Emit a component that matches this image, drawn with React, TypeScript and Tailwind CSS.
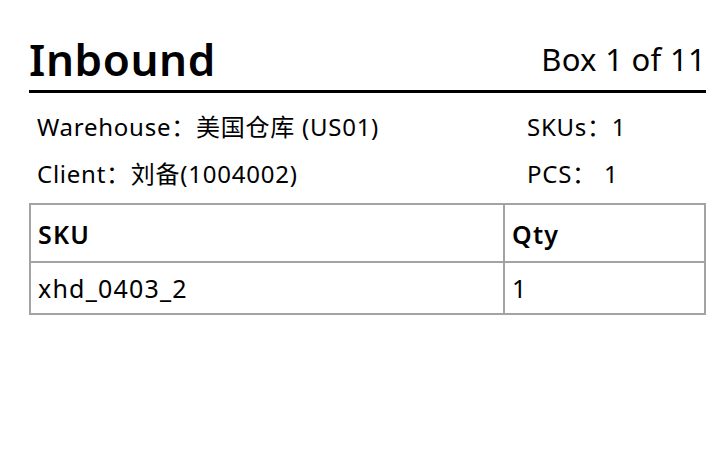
const rows = [{ sku: "xhd_0403_2", qty: 1 }];

function App() {
  return (
    <div
      className="min-h-screen bg-white text-black pl-[29px] pr-[14px] pt-[30px]"
      style={{ fontFamily: '"Noto Sans", "Noto Sans CJK SC", sans-serif' }}
    >
      <div className="flex items-end justify-between border-b-[3px] border-black pb-[2px]">
        <h1 className="text-[44px] font-semibold leading-[58px] tracking-[0.6px]">Inbound</h1>
        <div className="text-[31px] leading-[40px] mb-[9px] tracking-[0.3px]">Box 1 of 11</div>
      </div>

      <div className="grid grid-cols-[490px_1fr] text-[24px] leading-[47px] tracking-[0.75px] pt-[10px] pl-[8px]">
        <div>Warehouse：美国仓库 (US01)</div>
        <div>SKUs：1</div>
        <div>Client：刘备(1004002)</div>
        <div>
          PCS：<span className="pl-[7px]">1</span>
        </div>
      </div>

      <table className="w-full mt-[6px] border-collapse text-[25px] tracking-[1.2px]">
        <thead>
          <tr>
            <th className="w-[474px] h-[58px] border-2 border-[#a3a3a3] text-left font-semibold px-[7px] pt-[3px]">
              SKU
            </th>
            <th className="h-[58px] border-2 border-[#a3a3a3] text-left font-semibold px-[7px] pt-[3px]">
              Qty
            </th>
          </tr>
        </thead>
        <tbody>
          {rows.map((r) => (
            <tr key={r.sku}>
              <td className="h-[52px] border-2 border-[#a3a3a3] px-[7px] pt-[2px]">{r.sku}</td>
              <td className="h-[52px] border-2 border-[#a3a3a3] px-[7px] pt-[2px]">{r.qty}</td>
            </tr>
          ))}
        </tbody>
      </table>
    </div>
  );
}

export default App;
